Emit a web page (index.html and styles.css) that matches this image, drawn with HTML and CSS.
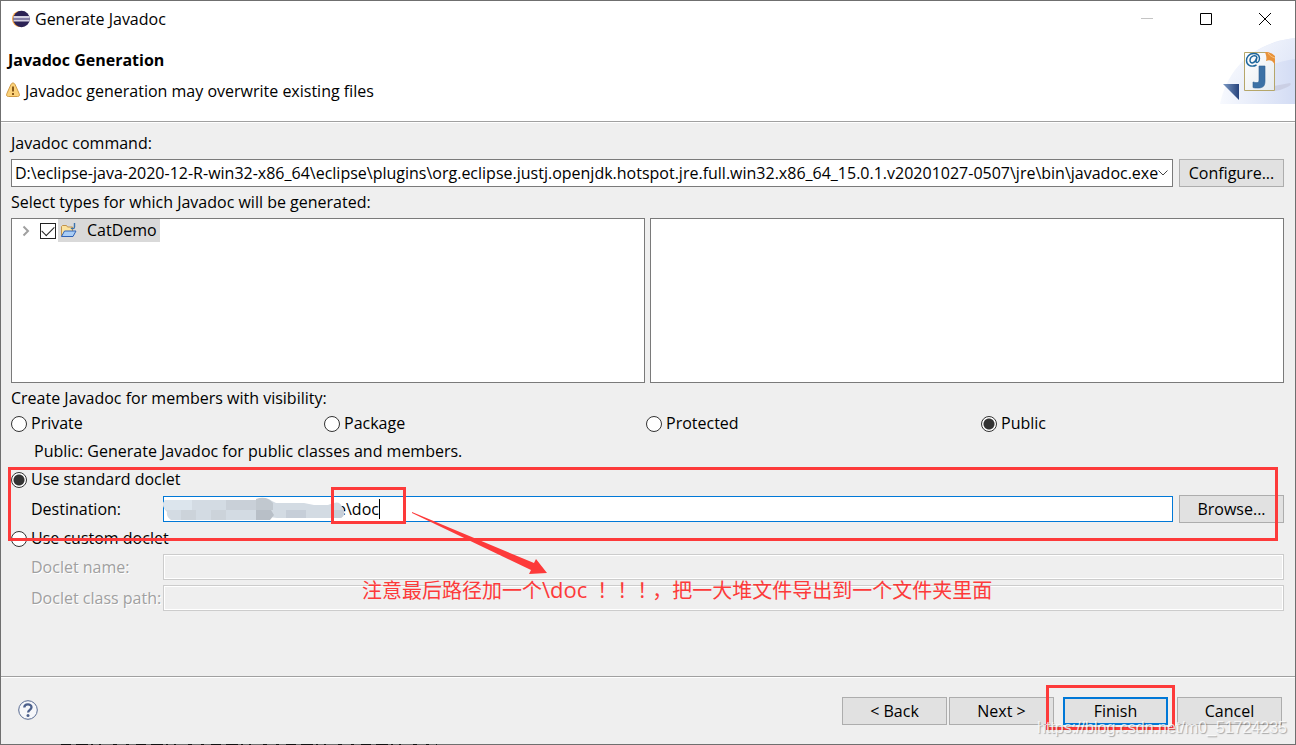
FILE: index.html
```html
<!DOCTYPE html>
<html lang="en">
<head>
<meta charset="utf-8">
<title>Generate Javadoc</title>
<link rel="stylesheet" href="styles.css">
</head>
<body>
<main class="window">
  <header class="titlebar">
    <svg class="app-icon" viewBox="0 0 18 18" aria-hidden="true">
      <circle cx="8" cy="9" r="8" fill="#f7a13c"/>
      <circle cx="9.500" cy="9" r="8.300" fill="#2c2255"/>
      <path d="M1.500 7h16M1.500 10.500h16" stroke="#d5d2e2" stroke-width="1.800"/>
      <path d="M1.200 8.800h16.600" stroke="#8d86ae" stroke-width="1.500"/>
    </svg>
    <h1 class="title">Generate Javadoc</h1>
    <div class="controls">
      <button class="control" aria-label="Minimize"><svg viewBox="0 0 12 12"><path d="M0 5.500h12" stroke="#c4c4c4"/></svg></button>
      <button class="control" aria-label="Maximize"><svg viewBox="0 0 12 12"><path d="M.5.5h11v11H.5z" stroke="#000"/></svg></button>
      <button class="control" aria-label="Close"><svg viewBox="0 0 12 12"><path d="M0 0l12 12M12 0L0 12" stroke="#000"/></svg></button>
    </div>
  </header>

  <section class="banner">
    <div class="banner-text">
      <h2 class="heading">Javadoc Generation</h2>
      <p class="message">
        <svg class="warn-icon" viewBox="0 0 14 16" aria-hidden="true">
          <path d="M7 1C8.300 1 8.800 2 9.300 3l3.800 8.500c.8 2 .2 3-1.600 3h-9C.7 14.500.1 13.500.9 11.500L4.700 3C5.200 2 5.700 1 7 1z" fill="#fbd27a" stroke="#cf9a45"/>
          <path d="M7 4.500v5M7 11v2" stroke="#7a4a10" stroke-width="1.800"/>
        </svg>
        <span>Javadoc generation may overwrite existing files</span>
      </p>
    </div>
    <svg class="banner-art" viewBox="0 0 76 66" aria-hidden="true">
      <defs>
        <linearGradient id="sky" x1="0" x2="1"><stop offset="0" stop-color="#f7f9fe"/><stop offset="1" stop-color="#d3dcf4"/></linearGradient>
        <linearGradient id="sky2" x1="0" x2="1" y1="0" y2="1"><stop offset="0" stop-color="#fff"/><stop offset="1" stop-color="#dfe6f8"/></linearGradient>
        <linearGradient id="page" x1="0" x2="1" y1="0" y2="1"><stop offset="0" stop-color="#fff"/><stop offset="1" stop-color="#e6ebf0"/></linearGradient>
        <linearGradient id="fold" x1="0" x2="1"><stop offset="0" stop-color="#7c9ac4"/><stop offset="1" stop-color="#27437c"/></linearGradient>
      </defs>
      <path d="M1 66C8 30 36 4 76 0v66z" fill="url(#sky)"/>
      <path d="M12 38C26 17 48 3 76 0v21C50 25 38 32 30 50z" fill="url(#sky2)" opacity=".7"/>
      <path d="M28 53l43-8c4 2-8 7-15 8z" fill="#c5c8dd" opacity=".7"/>
      <path d="M4 46h16v16z" fill="url(#fold)"/>
      <path d="M25.500 14.500h21l9 10v28h-30z" fill="url(#page)" stroke="#b5a66a"/>
      <path d="M46 14c1 3 2 6 1 9 4-2 7 0 9 4v-9c-3-3-6-4-10-4z" fill="#e8923a"/>
      <path d="M49 15c2 3 4 4 7 5" stroke="#f9c27d" fill="none"/>
      <path d="M38 19.500c-1-3-6.500-2-7 2.500-.3 4 4.500 4 6-.5l1-2.500-1 4.500c0 2 3.500 1 3.500-3 0-3.500-3-5-6-5-4.500 0-7 3.500-7 7 0 5 5 7 10 4.500" fill="none" stroke="#1d669c" stroke-width="1.400"/>
      <path d="M40 28h6v15c0 5-2 7-7 7-2 0-4 0-5-.5V44c4 1 6 1 6-2z" fill="#3c71a5" stroke="#2b6092" stroke-width=".6"/>
    </svg>
  </section>

  <form class="content" onsubmit="return false">
    <label class="line" for="command">Javadoc command:</label>
    <div class="field-row">
      <div class="combo">
        <select id="command" class="select"><option>D:\eclipse-java-2020-12-R-win32-x86_64\eclipse\plugins\org.eclipse.justj.openjdk.hotspot.jre.full.win32.x86_64_15.0.1.v20201027-0507\jre\bin\javadoc.exe</option></select>
        <svg class="chevron" viewBox="0 0 10 6" aria-hidden="true"><path d="M.5.5L5 5 9.500.5" fill="none" stroke="#444"/></svg>
      </div>
      <button class="button" type="button">Configure...</button>
    </div>

    <p class="line">Select types for which Javadoc will be generated:</p>
    <div class="panes">
      <div class="pane">
        <div class="tree-row">
          <svg class="expander" viewBox="0 0 8 12" aria-hidden="true"><path d="M1.500 1.500L6 6l-4.500 4.500" fill="none" stroke="#a0a0a0" stroke-width="2"/></svg>
          <input class="check" type="checkbox" id="catdemo" checked>
          <label class="tree-item" for="catdemo">
            <svg class="folder" viewBox="0 0 17 16" aria-hidden="true">
              <path d="M1.500 13V3.500l1-1h4l1 1.500h5V9" fill="#fbe3a0" stroke="#c2924a"/>
              <path d="M1.500 13.500L4.500 8h11.500l-3 5.500z" fill="#a9cdf5" stroke="#2f62b5"/>
              <path d="M14.500 0v4c0 2-2.500 2-3.500 1" fill="none" stroke="#3b72ad" stroke-width="1.400"/>
            </svg>
            <span>CatDemo</span>
          </label>
        </div>
      </div>
      <div class="pane"></div>
    </div>

    <p class="line">Create Javadoc for members with visibility:</p>
    <div class="visibility">
      <label class="choice"><input class="radio" type="radio" name="visibility">Private</label>
      <label class="choice"><input class="radio" type="radio" name="visibility">Package</label>
      <label class="choice"><input class="radio" type="radio" name="visibility">Protected</label>
      <label class="choice"><input class="radio" type="radio" name="visibility" checked>Public</label>
    </div>
    <p class="line hint">Public: Generate Javadoc for public classes and members.</p>

    <div class="doclet">
      <label class="choice"><input class="radio" type="radio" name="doclet" checked>Use standard doclet</label>
      <div class="field-row">
        <label class="field-label" for="destination">Destination:</label>
        <div class="destination">
          <input class="text focused" id="destination" type="text" value="e\doc">
          <svg class="smudge" viewBox="0 0 220 28" aria-hidden="true">
            <path d="M4 4h95q6-4 12 1l4 2h28l10 2h14q12-6 14 2 5 8-1 11h-64l-8-1-7 3H10q-5-3-4-8-7-7-2-12z" fill="#d3dbe3"/>
            <path d="M4 4h27v10H5q-5-5-1-10z" fill="#dce5ed"/>
            <path d="M65 4h30v10H65z" fill="#c9d0d8"/><path d="M95 3q10-4 17 4v7H95z" fill="#c1c8cf"/>
            <path d="M20 14h15v10H20zM50 14h15v10H50z" fill="#ccd3da"/><path d="M95 14h15l3 5-4 5H95z" fill="#b8bfc7"/>
            <path d="M125 14h20v8h-20zM171 14h12q0 8-4 8h-8z" fill="#c6ced8"/>
            <path d="M218.500 3v20" stroke="#000"/>
          </svg>
          <div class="mark mark-path"></div>
          <svg class="arrow" viewBox="0 0 136 64" aria-hidden="true"><path d="M0 0L122 51l2-4 11 14-18 1 2-4L0 1z" fill="#fd3a3a"/></svg>
        </div>
        <button class="button" type="button">Browse...</button>
      </div>
      <div class="mark mark-doclet"></div>
    </div>

    <label class="choice"><input class="radio" type="radio" name="doclet">Use custom doclet</label>
    <div class="field-row">
      <label class="field-label disabled" for="name">Doclet name:</label>
      <input class="text" id="name" type="text" disabled>
    </div>
    <div class="field-row last">
      <label class="field-label disabled" for="path">Doclet class path:</label>
      <input class="text" id="path" type="text" disabled>
      <p class="note" lang="zh-CN">注意最后路径加一个<span class="note-path">\doc</span><span class="note-stress" lang="zh-TW">！！！</span>，把一大堆文件导出到一个文件夹里面</p>
    </div>
  </form>

  <footer class="footer">
    <button class="help" aria-label="Help">
      <svg viewBox="0 0 20 20"><circle cx="10" cy="10" r="9.300" fill="#f6f7fa" stroke="#5a6c93"/><path d="M6.300 7.500C6.300 3.500 13.500 3.300 13.500 7.300c0 2.500-3.400 2.700-3.400 5.200" fill="none" stroke="#4c608c" stroke-width="2.300"/><circle cx="10" cy="15.500" r="1.500" fill="#4c608c"/></svg>
    </button>
    <div class="actions">
      <button class="button">&lt; Back</button>
      <button class="button">Next &gt;</button>
      <div class="finish"><button class="button primary">Finish</button><div class="mark mark-finish"></div></div>
      <button class="button">Cancel</button>
    </div>
    <span class="watermark">https://blog.csdn.net/m0_51724235</span>
    <svg class="edge" viewBox="0 0 376 1" aria-hidden="true"><path d="M0 .5h376" stroke="#111" stroke-dasharray="10 5 12 3 2 6 2 12 4 9 3 7"/></svg>
  </footer>
</main>
</body>
</html>
```
FILE: styles.css
```css
* { box-sizing: border-box; }

body {
  margin: 0;
  background: #efefef;
  color: #000;
  font: 16px/25px "Open Sans", "Noto Sans", "Noto Sans CJK SC", sans-serif;
}

h1, h2, p { margin: 0; font-size: inherit; }

button, input, select { font: inherit; color: inherit; border-radius: 0; margin: 0; }

.window {
  display: flex;
  flex-direction: column;
  min-height: 100vh;
  border: 1px solid #6f6f6f;
}

.titlebar {
  display: flex;
  align-items: center;
  height: 36px;
  padding: 0 1px 0 11px;
  background: #fff;
}
.app-icon { width: 18px; height: 18px; }
.title { flex: 1; padding-left: 5px; font-weight: 400; }
.controls { display: flex; }
.control {
  display: grid;
  place-items: center;
  width: 59px;
  height: 36px;
  padding: 0;
  border: 0;
  background: none;
}
.control svg { width: 12px; height: 12px; fill: none; }

.banner {
  display: flex;
  justify-content: space-between;
  height: 86px;
  background: #fff;
  border-bottom: 1px solid #fff;
  box-shadow: inset 0 -1px #a0a0a0;
}
.banner-text { padding: 11px 7px; }
.heading { font-weight: 700; }
.message { display: flex; align-items: center; gap: 5px; margin-left: -2px; padding-top: 6px; }
.warn-icon { width: 14px; height: 16px; margin-top: -4px; }
.banner-art { width: 76px; height: 66px; margin-top: 1px; }

.content {
  display: flex;
  flex: 1;
  flex-direction: column;
  gap: 3px;
  padding: 8px 11px 24px 10px;
}
.line { height: 25px; }
.field-row { display: flex; align-items: center; gap: 6px; }

.combo { position: relative; flex: 1; min-width: 0; }
.select {
  display: block;
  width: 100%;
  height: 28px;
  padding: 0 12px 0 3px;
  appearance: none;
  border: 1px solid #7a7a7a;
  background: #fff;
}
.chevron { position: absolute; top: 11px; right: 5px; width: 10px; height: 6px; pointer-events: none; }

.button {
  width: 105px;
  height: 28px;
  padding: 0;
  border: 1px solid #adadad;
  background: #e1e1e1;
  line-height: 24px;
}
.primary { border: 2px solid #0078d7; }

.panes { display: grid; grid-template-columns: 1fr 1fr; gap: 5px; min-height: 165px; }
.pane { border: 1px solid #7a7a7a; background: #fff; }
.tree-row { display: flex; align-items: center; padding-left: 10px; }
.expander { width: 8px; height: 12px; margin-right: 10px; }
.check {
  display: grid;
  place-items: center;
  width: 16px;
  height: 16px;
  appearance: none;
  border: 1px solid #222;
  background: #fff;
}
.check:checked::before {
  content: "";
  width: 11px;
  height: 6px;
  margin-top: -3px;
  border: solid #222;
  border-width: 0 0 1px 1px;
  transform: rotate(-45deg);
}
.tree-item {
  display: flex;
  align-items: center;
  gap: 10px;
  height: 23px;
  margin-left: 2px;
  padding: 0 3px 0 2px;
  background: #d9d9d9;
}
.folder { width: 17px; height: 16px; }

.visibility { display: grid; grid-template-columns: 313fr 322fr 335fr 303fr; margin-top: -3px; }
.choice { display: flex; align-items: center; gap: 4px; height: 25px; }
.radio {
  width: 16px;
  height: 16px;
  appearance: none;
  border: 1px solid #333;
  border-radius: 50%;
  background: #fff;
}
.radio:checked { background: radial-gradient(circle, #333 5px, #fff 6px); }
.hint { padding-left: 23px; }

.doclet { position: relative; display: flex; flex-direction: column; gap: 3px; }
.field-label { width: 126px; margin-left: 20px; white-space: nowrap; }
.field-label + * { flex: 1; }
.disabled { color: #a0a0a0; text-shadow: 1px 1px #fff; }
.text {
  width: 100%;
  height: 26px;
  padding: 0 4px;
  border: 1px solid #ccc;
  background: #efefef;
  box-shadow: inset 0 0 0 1px #fff;
}
.destination { position: relative; height: 26px; }
.focused { display: block; padding-left: 173px; border-color: #0078d7; background: #fff; }
.smudge { position: absolute; top: 0; left: -2px; width: 220px; height: 28px; pointer-events: none; }
.last { position: relative; margin-top: 2px; }

.mark { position: absolute; border: 3px solid #fd3a3a; pointer-events: none; }
.mark-doclet { top: 0; right: 6px; bottom: -18px; left: -3px; }
.mark-path { top: -9px; left: 168px; width: 75px; height: 37px; }
.mark-finish { inset: -12px -7px -5px -17px; }
.arrow { position: absolute; top: 16px; left: 249px; width: 136px; height: 64px; pointer-events: none; }
.note {
  position: absolute;
  top: -8px;
  left: 351px;
  color: #fd3a3a;
  font-size: 20px;
  white-space: nowrap;
}
.note-path { margin-right: 5px; font-size: 22px; }
.note-stress { font-family: "Noto Sans CJK TC", sans-serif; }

.footer {
  position: relative;
  display: flex;
  justify-content: space-between;
  padding: 20px 13px 19px 17px;
  border-top: 1px solid #a0a0a0;
  box-shadow: inset 0 1px #fff;
}
.help { width: 20px; height: 20px; margin-top: 3px; padding: 0; border: 0; background: none; }
.help svg { display: block; }
.actions { display: flex; gap: 2px; }
.finish { position: relative; margin: 0 7px; }
.watermark {
  position: absolute;
  right: 8px;
  bottom: 4px;
  color: rgba(255, 255, 255, 0.8);
  font-family: "Liberation Sans", sans-serif;
  text-shadow: 1px 1px 1px rgba(0, 0, 0, 0.3);
  pointer-events: none;
}
.edge { position: absolute; bottom: -1px; left: 60px; width: 376px; height: 1px; }
```
